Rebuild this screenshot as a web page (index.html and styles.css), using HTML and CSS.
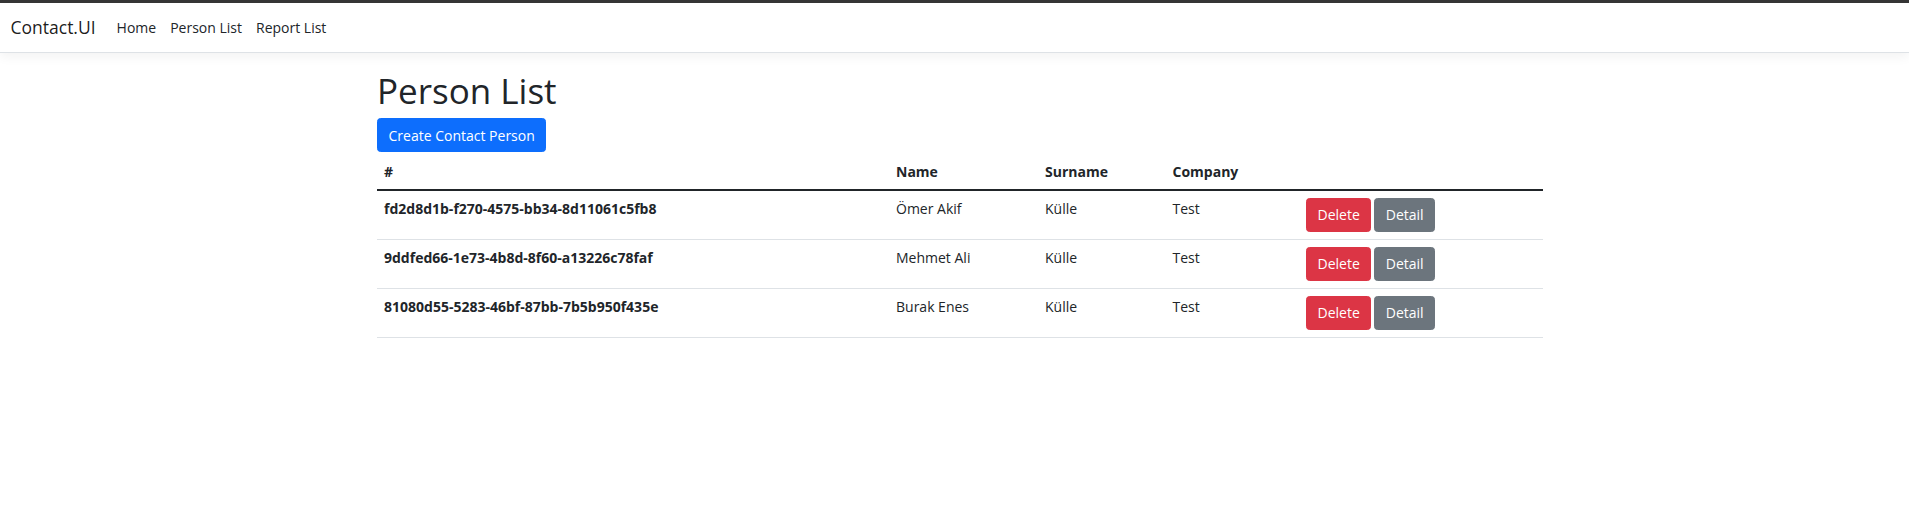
FILE: index.html
```html
<!DOCTYPE html>
<html lang="en">
<head>
<meta charset="utf-8">
<title>Person List - Contact.UI</title>
<link rel="stylesheet" href="styles.css">
</head>
<body>
<div class="topline"></div>
<header class="navbar">
  <a class="brand" href="#">Contact.UI</a>
  <nav class="nav">
    <a class="nav-link" href="#">Home</a>
    <a class="nav-link" href="#">Person List</a>
    <a class="nav-link" href="#">Report List</a>
  </nav>
</header>
<main class="container">
  <h1 class="title">Person List</h1>
  <a class="btn btn-primary btn-create" href="#">Create Contact Person</a>
  <table class="table">
    <colgroup>
      <col class="col-id">
      <col class="col-name">
      <col class="col-surname">
      <col class="col-company">
      <col class="col-actions">
    </colgroup>
    <thead>
      <tr>
        <th>#</th>
        <th>Name</th>
        <th>Surname</th>
        <th>Company</th>
        <th></th>
      </tr>
    </thead>
    <tbody>
      <tr>
        <th class="row-id">fd2d8d1b-f270-4575-bb34-8d11061c5fb8</th>
        <td>Ömer Akif</td>
        <td>Külle</td>
        <td>Test</td>
        <td><div class="actions"><a class="btn btn-danger" href="#">Delete</a><a class="btn btn-secondary" href="#">Detail</a></div></td>
      </tr>
      <tr>
        <th class="row-id">9ddfed66-1e73-4b8d-8f60-a13226c78faf</th>
        <td>Mehmet Ali</td>
        <td>Külle</td>
        <td>Test</td>
        <td><div class="actions"><a class="btn btn-danger" href="#">Delete</a><a class="btn btn-secondary" href="#">Detail</a></div></td>
      </tr>
      <tr>
        <th class="row-id">81080d55-5283-46bf-87bb-7b5b950f435e</th>
        <td>Burak Enes</td>
        <td>Külle</td>
        <td>Test</td>
        <td><div class="actions"><a class="btn btn-danger" href="#">Delete</a><a class="btn btn-secondary" href="#">Detail</a></div></td>
      </tr>
    </tbody>
  </table>
</main>
</body>
</html>
```

FILE: styles.css
```css
* { box-sizing: border-box; }

body {
  margin: 0;
  font-family: "Open Sans", "Noto Sans", "Liberation Sans", sans-serif;
  font-size: 14px;
  line-height: 1.5;
  color: #212529;
  background: #fff;
}

a { text-decoration: none; }

.topline {
  height: 3px;
  background: #363636;
}

.navbar {
  display: flex;
  align-items: center;
  padding: 7px 10.5px;
  background: #fff;
  border-bottom: 1px solid #dee2e6;
  box-shadow: 0 3.5px 10.5px rgba(0, 0, 0, 0.05);
  margin-bottom: 14px;
}

.brand {
  font-size: 17.5px;
  line-height: 26.25px;
  padding: 4.375px 0;
  margin-right: 14px;
  color: rgba(0, 0, 0, 0.9);
}

.nav {
  display: flex;
}

.nav-link {
  padding: 7px;
  line-height: 21px;
  color: #212529;
}

.container {
  width: 1166px;
  margin-left: 377px;
}

.title {
  margin: 0 0 4.5px;
  padding-top: 2.5px;
  font-size: 35px;
  font-weight: 500;
  line-height: 1.2;
}

.btn {
  display: inline-block;
  padding: 5.5px 10.5px;
  font-size: 14px;
  line-height: 21px;
  border: 1px solid transparent;
  border-radius: 3.5px;
  color: #fff;
  white-space: nowrap;
}

.btn-create {
  margin-top: 2px;
}

.btn-primary { background: #0d6efd; border-color: #0d6efd; }
.btn-danger { background: #dc3545; border-color: #dc3545; }
.btn-secondary { background: #6c757d; border-color: #6c757d; }

.table {
  width: 1166px;
  margin-top: 1.5px;
  table-layout: fixed;
  border-collapse: collapse;
  vertical-align: top;
}

.col-id { width: 512px; }
.col-name { width: 149px; }
.col-surname { width: 127.5px; }
.col-company { width: 133.5px; }
.col-actions { width: 244px; }

.table th,
.table td {
  padding: 7px;
  text-align: left;
  vertical-align: top;
}

.table thead th {
  font-weight: 700;
  border-bottom: 2px solid #212529;
}

.table tbody tr {
  border-bottom: 1px solid #dee2e6;
}

.table .row-id {
  font-weight: 700;
}

.actions {
  display: flex;
  gap: 3px;
}
```
